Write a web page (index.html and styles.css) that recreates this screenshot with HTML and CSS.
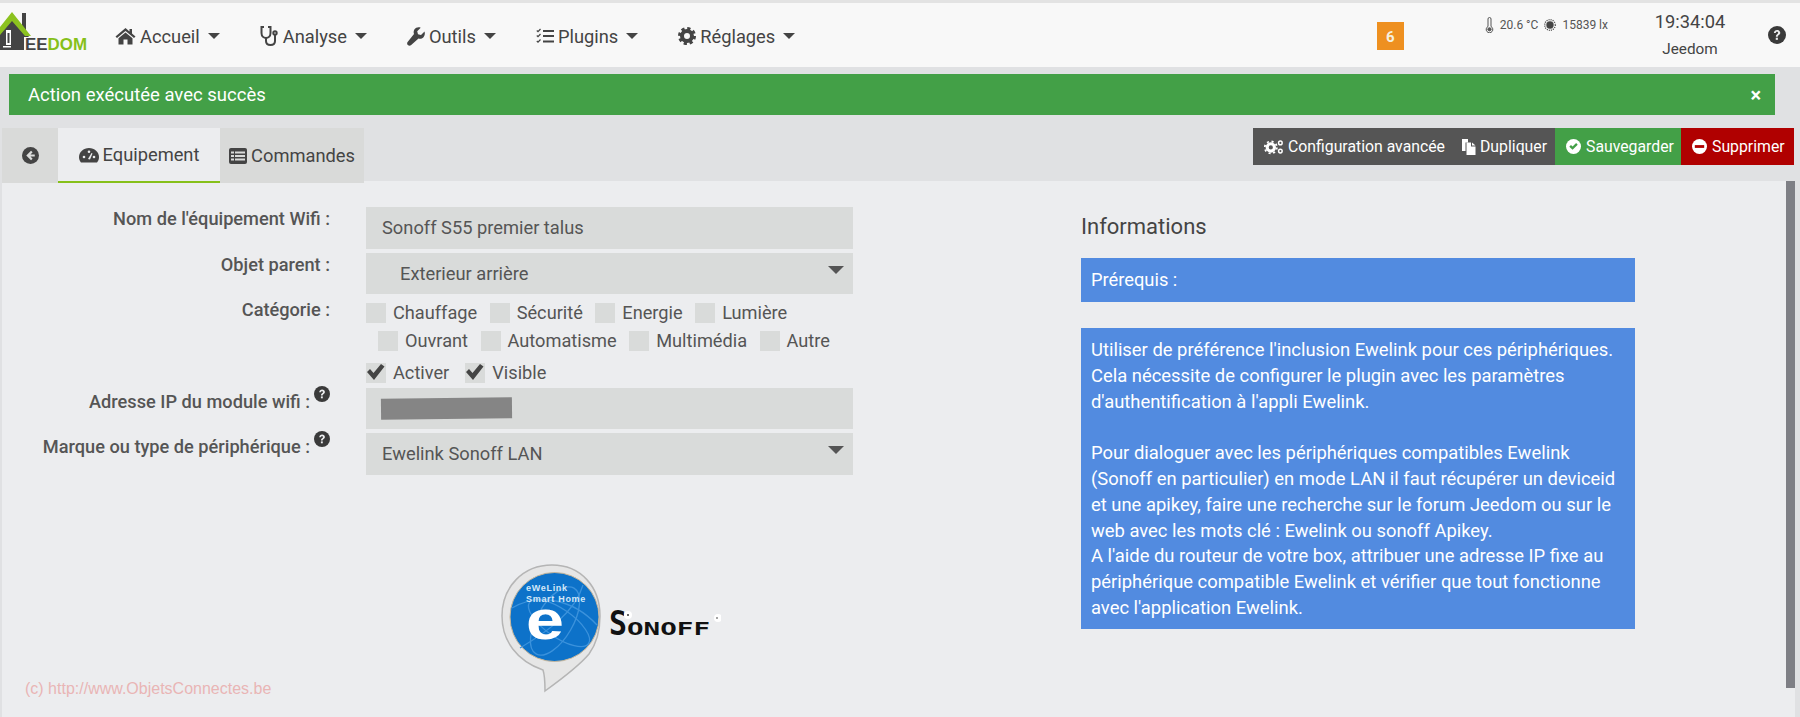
FILE: index.html
```html
<!DOCTYPE html>
<html lang="fr">
<head>
  <meta charset="UTF-8" />
  <title>Jeedom - Equipement Wifi</title>
  <link rel="stylesheet" href="styles.css">
</head>
<body>
  <svg class="defs" width="0" height="0">
    <symbol id="i-help" viewBox="0 0 16 16">
      <circle cx="8" cy="8" r="8"/>
      <path d="M5.2 6.2C5.4 4.5 6.6 3.6 8.1 3.6c1.6 0 2.8 1 2.8 2.4 0 1.2-.7 1.7-1.5 2.3-.5.3-.7.6-.7 1.2H7c0-1.2.4-1.7 1.1-2.2.6-.4.9-.7.9-1.2 0-.5-.4-.9-1-.9-.7 0-1 .4-1.1 1z" fill="#ecedef"/>
      <rect x="6.9" y="10.4" width="1.9" height="1.9" fill="#ecedef"/>
    </symbol>
  </svg>

  <header class="navbar">
    <a class="logo">
      <svg width="90" height="52" viewBox="0 0 90 52">
        <path d="M4 24 L12 15 L22 23 V10 H26 V30 L29 34 H24 V47 H0 V28z" fill="#444"/>
        <path d="M0 24 L12 9 L31 33 L25 33 L12 18 L0 32z" fill="#8cc21f"/>
        <rect x="6" y="27" width="5" height="15" fill="#fff"/>
        <rect x="7.500" y="30" width="2" height="10" fill="#444"/>
        <rect x="3" y="43" width="8" height="1.500" fill="#fff"/>
        <text x="25" y="47" class="logo-dark" textLength="62" lengthAdjust="spacingAndGlyphs">EE<tspan class="logo-green">DOM</tspan></text>
      </svg>
    </a>
    <nav class="menu">
      <a class="menu-item">
        <svg width="21" height="18" viewBox="0 0 21 18" fill="#444"><path d="M10.5 1 L0.5 9.5 L2 11 L10.5 4 L19 11 L20.5 9.5 L17 6.5 V2 H14.5 V4.4z"/><path d="M10.5 5.5 L3.5 11.2 V17.5 H8.5 V12.5 H12.5 V17.5 H17.5 V11.2z"/></svg>
        Accueil <i class="caret"></i>
      </a>
      <a class="menu-item">
        <svg width="19" height="20" viewBox="0 0 19 20" fill="none" stroke="#444" stroke-width="2"><path d="M4 1 H1.500 V7 C1.500 10.500 4 12 6 12 C8 12 10.500 10.500 10.500 7 V1 H8"/><path d="M6 12 V15 C6 17.500 8 19 10.500 19 C13 19 15 17.500 15 15 V9"/><circle cx="15" cy="7" r="1.700"/></svg>
        Analyse <i class="caret"></i>
      </a>
      <a class="menu-item">
        <svg width="18" height="19" viewBox="0 0 18 19" fill="#444"><path d="M17.500 4.500 L14 8 L11 7.200 L10.200 4.200 L13.700 .7 C11.500 -.2 8.800 .4 7.500 2.300 C6.500 3.800 6.400 5.500 7 7 L.8 14.800 C-.3 16 .1 17.400 .9 18.100 C1.800 18.900 3.100 19 4.200 18 L11.500 11.400 C13 12 15 11.700 16.300 10.400 C17.800 8.900 18.200 6.500 17.500 4.500z"/></svg>
        Outils <i class="caret"></i>
      </a>
      <a class="menu-item">
        <svg width="18" height="16" viewBox="0 0 18 16" fill="none" stroke="#444"><path d="M.8 2.500 L2 3.700 L4.500 1M.8 7.500 L2 8.700 L4.500 6M.8 13 L2 14.200 L4.500 11.500" stroke-width="1.200"/><path d="M7 3 H18M7 8 H18M7 13.500 H18" stroke-width="1.800"/></svg>
        Plugins <i class="caret"></i>
      </a>
      <a class="menu-item">
        <svg width="18" height="18" viewBox="0 0 18 18" fill="none" stroke="#444"><circle cx="9" cy="9" r="5" stroke-width="4"/><circle cx="9" cy="9" r="7.500" stroke-width="3" stroke-dasharray="3.200 2.690"/></svg>
        Réglages <i class="caret"></i>
      </a>
    </nav>
    <span class="badge">6</span>
    <div class="sensors">
      <svg width="9" height="16" viewBox="0 0 9 16" fill="none" stroke="#555" stroke-width="1"><path d="M3 9.500 V2 a1.500 1.500 0 0 1 3 0 V9.500 a3.300 3.300 0 1 1 -3 0z"/><circle cx="4.500" cy="12.300" r="1.600" fill="#555"/></svg>
      <span>20.6 °C</span>
      <svg class="sun" width="12" height="12" viewBox="0 0 12 12"><circle cx="6" cy="6" r="3.700" fill="#444"/><circle cx="6" cy="6" r="5.300" fill="none" stroke="#444" stroke-width="1.300" stroke-dasharray="1 1.080"/></svg>
      <span>15839 lx</span>
    </div>
    <div class="clock">
      <div class="time">19:34:04</div>
      <div class="host">Jeedom</div>
    </div>
    <svg class="nav-help" width="18" height="18"><use href="#i-help"/></svg>
  </header>

  <div class="alert">
    <span>Action exécutée avec succès</span>
    <span class="alert-close">×</span>
  </div>

  <div class="tabbar">
    <ul class="tabs">
      <li class="tab tab-back">
        <svg width="17" height="17" viewBox="0 0 16 16"><circle cx="8" cy="8" r="8" fill="#444"/><path d="M8.500 3.500 L10 5 L8 7 H12 V9 H8 L10 11 L8.500 12.500 L4 8z" fill="#dcdddc"/></svg>
      </li>
      <li class="tab tab-active">
        <svg width="20" height="16" viewBox="0 0 20 16"><path d="M10 1 C4.500 1 0 5 0 10 C0 12 .7 14 2 15.500 H18 C19.300 14 20 12 20 10 C20 5 15.500 1 10 1z" fill="#444"/><circle cx="5" cy="10" r="1.300" fill="#ecedef"/><circle cx="10" cy="4.800" r="1.300" fill="#ecedef"/><circle cx="15" cy="10" r="1.300" fill="#ecedef"/><path d="M9 12 L12.500 6 L13.500 6.500 L11 12.500z" fill="#ecedef"/></svg>
        Equipement
      </li>
      <li class="tab">
        <svg width="18" height="16" viewBox="0 0 18 16"><rect width="18" height="16" rx="2" fill="#444"/><path d="M2 3.500 H5V5.500 H2zM6 3.500 H16V5.500 H6zM2 7 H5V9 H2zM6 7 H16V9 H6zM2 10.500 H5V12.500 H2zM6 10.500 H16V12.500 H6z" fill="#d9dad9"/></svg>
        Commandes
      </li>
    </ul>
    <div class="actions">
      <a class="btn btn-dark">
        <span class="btn-part">
          <svg width="20" height="16" viewBox="0 0 22 16"><circle cx="7.500" cy="8.500" r="4" fill="none" stroke="#fff" stroke-width="3.400"/><circle cx="7.500" cy="8.500" r="6.600" fill="none" stroke="#fff" stroke-width="2" stroke-dasharray="2.300 2.880"/><circle cx="18" cy="3.500" r="2" fill="none" stroke="#fff" stroke-width="1.600"/><circle cx="18" cy="12.500" r="2" fill="none" stroke="#fff" stroke-width="1.600"/></svg>
          Configuration avancée
        </span>
        <span class="btn-part">
          <svg width="14" height="17" viewBox="0 0 14 17"><path d="M0 1 H6 V4.500 H3.500 V13 H0z" fill="#fff"/><path d="M4.500 4.500 H9 V8.500 H13.500 V17 H4.500z" fill="#fff"/><path d="M10 4.500 L13.500 7.500 H10z" fill="#fff"/></svg>
          Dupliquer
        </span>
      </a>
      <a class="btn btn-green">
        <svg width="15" height="15" viewBox="0 0 16 16"><circle cx="8" cy="8" r="8" fill="#fff"/><path d="M3.500 8.200 L5.300 6.400 L7 8.100 L10.800 4.300 L12.500 6 L7 11.500z" fill="#43a047"/></svg>
        Sauvegarder
      </a>
      <a class="btn btn-red">
        <svg width="15" height="15" viewBox="0 0 16 16"><circle cx="8" cy="8" r="8" fill="#fff"/><rect x="3" y="6.500" width="10" height="3" fill="#b00000"/></svg>
        Supprimer
      </a>
    </div>
  </div>

  <main class="panel">
    <section class="col-form">
      <form class="form">
        <label class="form-label">Nom de l'équipement Wifi :</label>
        <input class="field" type="text" value="Sonoff S55 premier talus" />

        <label class="form-label">Objet parent :</label>
        <div class="select-wrap">
          <select class="field field-indent"><option>Exterieur arrière</option></select>
        </div>

        <label class="form-label">Catégorie :</label>
        <div class="checks">
          <div class="check-row">
            <label class="check"><i class="box"></i>Chauffage</label>
            <label class="check"><i class="box"></i>Sécurité</label>
            <label class="check"><i class="box"></i>Energie</label>
            <label class="check"><i class="box"></i>Lumière</label>
          </div>
          <div class="check-row check-row-2">
            <label class="check"><i class="box"></i>Ouvrant</label>
            <label class="check"><i class="box"></i>Automatisme</label>
            <label class="check"><i class="box"></i>Multimédia</label>
            <label class="check"><i class="box"></i>Autre</label>
          </div>
          <div class="check-row check-row-3">
            <label class="check"><i class="box box-on"><svg width="20" height="18" viewBox="0 0 20 18"><path d="M1 9 L4 6 L7.500 10 L15 1 L18.500 3.500 L8 17z" fill="#444"/></svg></i>Activer</label>
            <label class="check"><i class="box box-on"><svg width="20" height="18" viewBox="0 0 20 18"><path d="M1 9 L4 6 L7.500 10 L15 1 L18.500 3.500 L8 17z" fill="#444"/></svg></i>Visible</label>
          </div>
        </div>

        <label class="form-label form-label-tip">Adresse IP du module wifi : <svg class="tip" width="16" height="16"><use href="#i-help"/></svg></label>
        <div class="field field-ip"><span class="masked"></span></div>

        <label class="form-label form-label-tip">Marque ou type de périphérique : <svg class="tip" width="16" height="16"><use href="#i-help"/></svg></label>
        <div class="select-wrap">
          <select class="field"><option>Ewelink Sonoff LAN</option></select>
        </div>
      </form>

      <div class="brand">
        <svg width="226" height="132" viewBox="0 0 226 132">
          <path d="M57 2 C28 2 7 24 7 53 C7 78 22 98 48 107 C50 113 50 120 50 128 C68 115 84 103 94 91 C102 80 105 67 105 53 C105 24 86 2 57 2z" fill="#e6e6e6" stroke="#b5b5b5" stroke-width="1.500"/>
          <circle cx="59.500" cy="54" r="44.500" fill="#0d72c9" stroke="#c9b79a" stroke-width="1"/>
          <g fill="none" stroke="#3b92dc" stroke-width="1.300">
            <ellipse cx="64" cy="60" rx="36" ry="14" transform="rotate(35 64 60)"/>
            <ellipse cx="60" cy="58" rx="38" ry="18" transform="rotate(-60 60 58)"/>
            <path d="M17 45 C42 30 77 35 102 62"/>
            <path d="M25 85 C50 70 80 50 88 22"/>
          </g>
          <text x="31" y="28" class="ew-small">eWeLink</text>
          <text x="31" y="39" class="ew-small">Smart Home</text>
          <text x="31" y="76" class="ew-big" textLength="38" lengthAdjust="spacingAndGlyphs">e</text>
          <text x="114" y="72" class="sonoff-s" textLength="18" lengthAdjust="spacingAndGlyphs">S</text>
          <text x="132" y="72" class="sonoff" textLength="83" lengthAdjust="spacingAndGlyphs">ONOFF</text>
          <circle cx="133" cy="52" r="4" fill="#fff"/>
          <circle cx="133" cy="52" r="1" fill="#333"/>
          <circle cx="223" cy="55" r="4" fill="#fff"/>
          <circle cx="222" cy="55" r=".8" fill="#333"/>
        </svg>
      </div>
    </section>

    <aside class="col-info">
      <h3 class="info-title">Informations</h3>
      <div class="info-box info-head">Prérequis :</div>
      <div class="info-box info-body">
        Utiliser de préférence l'inclusion Ewelink pour ces périphériques.<br>
        Cela nécessite de configurer le plugin avec les paramètres<br>
        d'authentification à l'appli Ewelink.<br>
        <br>
        Pour dialoguer avec les périphériques compatibles Ewelink<br>
        (Sonoff en particulier) en mode LAN il faut récupérer un deviceid<br>
        et une apikey, faire une recherche sur le forum Jeedom ou sur le<br>
        web avec les mots clé : Ewelink ou sonoff Apikey.<br>
        A l'aide du routeur de votre box, attribuer une adresse IP fixe au<br>
        périphérique compatible Ewelink et vérifier que tout fonctionne<br>
        avec l'application Ewelink.
      </div>
    </aside>

    <div class="watermark">(c) http://www.ObjetsConnectes.be</div>
    <div class="scrollbar"></div>
  </main>
</body>
</html>
```

FILE: styles.css
```css
* {
  box-sizing: border-box;
}
html, body {
  margin: 0;
  height: 717px;
  overflow: hidden;
}
body {
  font-family: Roboto, sans-serif;
  font-size: 16px;
  background-color: #e0e1e3;
  color: #555;
}
svg {
  flex: none;
}
.defs {
  position: absolute;
}
#i-help {
  fill: #3a3a3a;
}

/* barre du haut */
.navbar {
  height: 67px;
  border-top: 3px solid #e3e3e3;
  background-color: #f8f8f8;
  display: flex;
  align-items: flex-start;
}
.logo {
  width: 115px;
  height: 64px;
  display: block;
  flex: none;
}
.logo-dark {
  font: bold 17px "Liberation Sans", sans-serif;
  fill: #444;
}
.logo-green {
  fill: #86c01a;
}
.menu {
  display: flex;
  gap: 40px;
  padding-top: 21px;
}
.menu-item {
  display: flex;
  align-items: center;
  height: 24px;
  gap: 4px;
  font-size: 18.3px;
  color: #444;
  white-space: nowrap;
}
.caret {
  width: 0;
  height: 0;
  margin-left: 4px;
  border-left: 6px solid transparent;
  border-right: 6px solid transparent;
  border-top: 6px solid #444;
}
.badge {
  width: 27px;
  height: 28px;
  margin: 19px 0 0 581.5px;
  background-color: #ee9020;
  color: #f5efdf;
  font-weight: 700;
  font-size: 15px;
  line-height: 30px;
  text-align: center;
  flex: none;
}
.sensors {
  display: flex;
  align-items: center;
  gap: 6px;
  margin: 14px 0 0 81px;
  font-size: 12px;
  color: #555;
  height: 16px;
  white-space: nowrap;
}
.sun {
  margin-left: 0;
}
.clock {
  width: 80px;
  margin: 7px 0 0 42px;
  text-align: center;
  color: #444;
  flex: none;
}
.time {
  font-size: 18.3px;
  line-height: 24px;
}
.host {
  font-size: 15.3px;
  line-height: 20px;
  margin-top: 5px;
}
.nav-help {
  margin: 23px 0 0 38px;
}

/* message */
.alert {
  margin: 7px 25px 0 9px;
  height: 41px;
  padding: 0 14px 0 19px;
  background-color: #43a047;
  color: #fff;
  font-size: 18.5px;
  display: flex;
  justify-content: space-between;
  align-items: center;
}
.alert-close {
  font-weight: 700;
  font-size: 20px;
}

/* onglets et boutons */
.tabbar {
  display: flex;
  justify-content: space-between;
  padding: 13px 6px 0 2px;
  height: 68px;
}
.tabs {
  position: relative;
  z-index: 1;
  list-style: none;
  margin: 0;
  padding: 0;
  display: flex;
  height: 55px;
}
.tab {
  display: flex;
  align-items: center;
  justify-content: center;
  gap: 4px;
  width: 144px;
  background-color: #d9dad9;
  font-size: 18.3px;
  color: #444;
}
.tab-back {
  width: 56px;
}
.tab-active {
  width: 162px;
  background-color: #ecedef;
  border-bottom: 2px solid #86c01a;
}
.actions {
  display: flex;
  height: 37px;
  font-size: 15.8px;
  color: #fff;
}
.btn {
  display: flex;
  align-items: center;
  gap: 5px;
  padding: 0 4px 0 11px;
  white-space: nowrap;
}
.btn-part {
  display: flex;
  align-items: center;
  gap: 4px;
}
.btn-dark {
  width: 302px;
  gap: 17px;
  background-color: #555;
}
.btn-green {
  width: 126px;
  background-color: #43a047;
}
.btn-red {
  width: 113px;
  background-color: #b00000;
}

/* contenu */
.panel {
  position: relative;
  margin: -2px 5px 0 2px;
  height: 536px;
  background-color: #ecedef;
  display: grid;
  grid-template-columns: 1079px 554px;
}
.col-form {
  padding-top: 26px;
}
.form {
  display: grid;
  grid-template-columns: 328px 487px;
  column-gap: 36px;
  row-gap: 4px;
  align-items: start;
}
.form-label {
  text-align: right;
  font-weight: 500;
  font-size: 18.2px;
  line-height: 24px;
  color: #555;
  white-space: nowrap;
}
.form-label-tip {
  display: flex;
  justify-content: flex-end;
  gap: 4px;
  line-height: 27px;
}
.tip {
  margin-top: -2px;
}
.field {
  display: block;
  width: 100%;
  height: 41.5px;
  padding: 0 16px;
  border: none;
  border-radius: 0;
  background-color: #d9dbda;
  font-family: Roboto, sans-serif;
  font-size: 18.3px;
  color: #555;
  appearance: none;
}
.field-indent {
  padding-left: 34px;
}
.select-wrap {
  position: relative;
}
.select-wrap::after {
  content: "";
  position: absolute;
  right: 9px;
  top: 13px;
  border-left: 8px solid transparent;
  border-right: 8px solid transparent;
  border-top: 8px solid #555;
}
.field-ip {
  padding-top: 10px;
  padding-left: 15px;
}
.masked {
  display: block;
  width: 131px;
  height: 21px;
  background-color: #858585;
  transform: rotate(-0.6deg);
}
.checks {
  height: 85.5px;
  padding-top: 5px;
}
.check-row {
  display: flex;
  gap: 12.5px;
  height: 28px;
}
.check-row-2 {
  padding-left: 12px;
}
.check-row-3 {
  margin-top: 4px;
  height: 20px;
  gap: 16px;
}
.check {
  display: flex;
  gap: 7px;
  font-size: 18.2px;
  line-height: 20px;
  color: #555;
}
.box {
  width: 20px;
  height: 20px;
  background-color: #d9dbda;
  display: block;
}
.box-on svg {
  display: block;
}
.brand {
  margin: 88px 0 0 493px;
}
.col-info {
  padding-top: 33px;
}
.info-title {
  margin: 0 0 18px;
  font-size: 22px;
  font-weight: 400;
  line-height: 26px;
  color: #444;
}
.info-box {
  background-color: #528be0;
  color: #fff;
  padding: 0 10px;
}
.info-head {
  height: 44px;
  font-size: 18.3px;
  line-height: 44px;
  margin-bottom: 26px;
}
.info-body {
  height: 301px;
  padding-top: 9px;
  font-size: 18.4px;
  line-height: 25.8px;
  white-space: nowrap;
}
.watermark {
  position: absolute;
  left: 23px;
  top: 499px;
  font-family: "Liberation Sans", sans-serif;
  font-size: 16px;
  color: #e9b5b5;
}
.scrollbar {
  position: absolute;
  right: 0;
  top: 0;
  width: 9.5px;
  height: 507px;
  background-color: #7e7f85;
}
.ew-small {
  font: bold 9px "Liberation Sans", sans-serif;
  fill: #d4e8f8;
  letter-spacing: .7px;
}
.ew-big {
  font: bold 56px "Liberation Sans", sans-serif;
  fill: #fff;
}
.sonoff-s {
  font: bold 34px "DejaVu Sans Mono", monospace;
  fill: #111;
}
.sonoff {
  font: bold 17px "DejaVu Sans Mono", monospace;
  fill: #111;
}
```
